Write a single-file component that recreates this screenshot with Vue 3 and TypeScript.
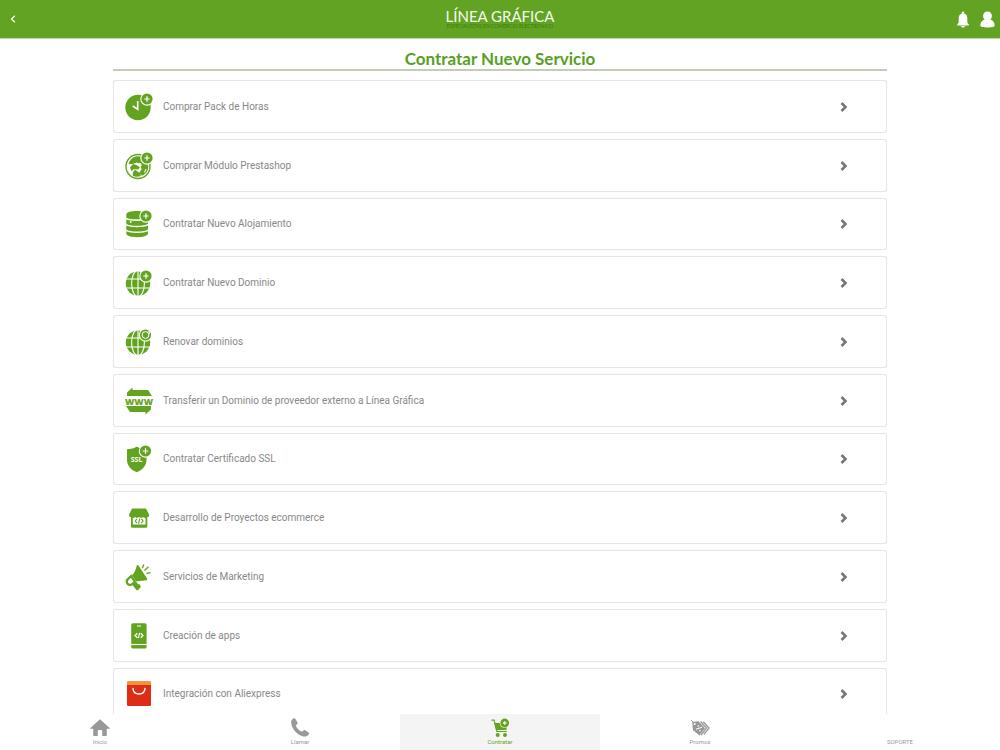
<script setup lang="ts">
type IconName = 'clock' | 'presta' | 'database' | 'globe' | 'renew' | 'transfer' | 'ssl' | 'store' | 'megaphone' | 'phone' | 'bag'

interface Badge { x: number; y: number; ring?: boolean }
interface Service { icon: IconName; label: string; badge?: Badge }
interface Tab { icon: 'home' | 'call' | 'cart' | 'tags' | null; label: string; active?: boolean }

const services: Service[] = [
  { icon: 'clock', label: 'Comprar Pack de Horas', badge: { x: 23, y: 7 } },
  { icon: 'presta', label: 'Comprar Módulo Prestashop', badge: { x: 23, y: 7 } },
  { icon: 'database', label: 'Contratar Nuevo Alojamiento', badge: { x: 22, y: 7 } },
  { icon: 'globe', label: 'Contratar Nuevo Dominio', badge: { x: 22, y: 8 } },
  { icon: 'renew', label: 'Renovar dominios', badge: { x: 21.5, y: 8, ring: true } },
  { icon: 'transfer', label: 'Transferir un Dominio de proveedor externo a Línea Gráfica' },
  { icon: 'ssl', label: 'Contratar Certificado SSL', badge: { x: 21.5, y: 7 } },
  { icon: 'store', label: 'Desarrollo de Proyectos ecommerce' },
  { icon: 'megaphone', label: 'Servicios de Marketing' },
  { icon: 'phone', label: 'Creación de apps' },
  { icon: 'bag', label: 'Integración con Aliexpress' },
]

const tabs: Tab[] = [
  { icon: 'home', label: 'Inicio' },
  { icon: 'call', label: 'Llamar' },
  { icon: 'cart', label: 'Contratar', active: true },
  { icon: 'tags', label: 'Promos' },
  { icon: null, label: 'SOPORTE' },
]
</script>

<template>
  <div class="app">
    <header class="topbar">
      <button class="icon-btn back" type="button" aria-label="Volver">
        <svg width="6" height="8" viewBox="0 0 6 8"><path d="M4.8.8 1.5 4l3.300 3.200" fill="none" stroke="#fff" stroke-width="1.200" /></svg>
      </button>
      <div class="brand">
        <span class="brand-name">LÍNEA GRÁFICA</span>
        <span class="brand-tag">ESPECIALISTAS EN COMERCIO ELECTRÓNICO</span>
      </div>
      <div class="actions">
        <button class="icon-btn" type="button" aria-label="Notificaciones">
          <svg width="12" height="17" viewBox="0 0 12 17" fill="#fff">
            <circle cx="6" cy="1.700" r="1.200" />
            <path d="M6 2.400c-2.900 0-4.300 1.900-4.300 4.700v4.500L.2 13.600v1h11.600v-1l-1.500-2V7.100c0-2.800-1.400-4.700-4.300-4.700zM4 15.100h4c-.2 1-.9 1.500-2 1.500s-1.800-.5-2-1.500z" />
          </svg>
        </button>
        <button class="icon-btn" type="button" aria-label="Mi cuenta">
          <svg width="15" height="17" viewBox="0 0 15 17" fill="#fff">
            <path d="M7.500.4c2.700 0 4.400 1.900 4.400 4.400 0 1.700-.7 2.900-1.600 3.800 2.700.8 4.400 3.100 4.400 5.900 0 1.300-3 2-7.200 2s-7.200-.7-7.200-2c0-2.800 1.700-5.100 4.400-5.900-.9-.9-1.600-2.100-1.600-3.800C3.100 2.300 4.800.4 7.500.4z" />
          </svg>
        </button>
      </div>
    </header>

    <main class="content">
      <h1 class="title">Contratar Nuevo Servicio</h1>
      <ul class="list">
        <li v-for="s in services" :key="s.label">
          <button class="card" type="button">
            <svg class="service-icon" viewBox="0 0 30 30" width="30" height="30" fill="#62a420" aria-hidden="true">
              <template v-if="s.icon === 'clock'">
                <circle cx="14" cy="15.500" r="12.700" />
                <path d="M8.700 14 13.700 17.200V9" fill="none" stroke="#fff" stroke-width="1.600" />
              </template>
              <template v-else-if="s.icon === 'presta'">
                <circle cx="14" cy="15.500" r="12" fill="#fff" stroke="#62a420" stroke-width="1.400" />
                <path d="M4.500 13C6 7.800 9.700 5.200 14 5.200c6 0 10.300 4.600 10.300 10.300 0 4.500-2.500 7.700-6.300 9.300l-3.200-2.600 2.700-3.700-1-4.500-3.500-2.500L8.500 13z" />
                <path d="M6 16.500 9 13l3.500 1 3.500 2.500-2 2-4.500-.3-2 2zM9 25c-.8-3 .2-5.300 2.500-6l3.500 2.500L17 25c-2.500 1-5.500 1.100-8 0z" />
                <path d="M13.500 12.500 16.500 12l1.500 2.500-2 1z" fill="#fff" />
                <path d="M20.500 21.500 22 18" stroke="#fff" stroke-width="1" />
              </template>
              <template v-else-if="s.icon === 'database'">
                <path d="M2.300 5.500C2.300 3 7 2 13 2s11 1 11 3.500v2.700c0 1.300-5 2.100-11 2.100S2.300 9.500 2.300 8.200z" />
                <path d="M2.300 10.600c2.500 1.100 6 1.400 10.700 1.400s8.500-.3 11-1.400v4.200c-2 1.500-6 2-11 2s-9-.5-10.700-2z" />
                <path d="M2.300 16.600c2.500 1.300 6 1.700 10.700 1.700s8.500-.4 11-1.700v3.900c-2 1.400-6 2-11 2s-9-.6-10.700-2z" />
                <path d="M2.300 22.300c2.500 1.300 6 1.700 10.700 1.700s8.500-.4 11-1.700v2.500c-.6 2.300-5 3.400-11 3.400S2.900 27.100 2.300 24.800z" />
                <circle cx="6.700" cy="13" r=".9" fill="#fff" />
              </template>
              <template v-else-if="s.icon === 'globe' || s.icon === 'renew'">
                <circle cx="14" cy="15.500" r="12.200" />
                <g fill="none" stroke="#fff" stroke-width="1.100">
                  <ellipse cx="14" cy="15.500" rx="6.400" ry="13" />
                  <path d="M14 2v27M1 11h26M1 20h26" />
                </g>
              </template>
              <template v-else-if="s.icon === 'transfer'">
                <path d="M3 6.500 8.500 1.500V4H24l4 6H3zM27 23.500l-5.500 5V26H6l-4-6h25z" />
                <text x="15" y="18.700" text-anchor="middle" class="www">WWW</text>
              </template>
              <template v-else-if="s.icon === 'ssl'">
                <path d="M12.800 2.500c2.500 1.800 6 2.700 9.700 2.800V16c0 6-4.300 9.800-9.700 12.300C7.400 25.800 3 22 3 16V5.300c3.700-.1 7.300-1 9.800-2.800z" />
                <text x="12.500" y="17.500" text-anchor="middle" class="ssl">SSL</text>
              </template>
              <template v-else-if="s.icon === 'store'">
                <path d="M8 5.500h14l3.200 6.200c0 1.500-.8 2.300-1.600 2.300H6.700c-1 0-1.700-.8-1.700-2.300z" />
                <path d="M7 13h16.300v10.500c0 .8-.5 1.200-1.200 1.200H8.200c-.7 0-1.200-.4-1.200-1.200z" />
                <path d="M8.800 14.300h12.700v7.200H8.800z" fill="#fff" />
                <path d="M13 15.800 11.200 18l1.800 2.200M17.300 15.800l1.800 2.200-1.800 2.200M15.800 15.300l-1.300 5.400" fill="none" stroke="#62a420" stroke-width="1.100" />
                <path d="M9 13v2M13 13v1.700M17.300 13v1.700M21.300 13v2" stroke="#62a420" stroke-width="1.800" />
              </template>
              <template v-else-if="s.icon === 'megaphone'">
                <path d="M12.800 3.300c.8-.6 1.500-.2 2 .7l8.300 12.500c.5.9.1 1.700-.8 1.700L12 19.500l-4-6.200c2.800-2.400 4-6 4.800-10z" />
                <path d="M7.200 14 11 20.200l-3.500 2.200c-1.600.8-3.300.4-4.200-1-1-1.700-.6-3.400.8-4.600z" fill="#fff" stroke="#62a420" stroke-width="2.200" />
                <path d="M8 22.500 12.500 20l1.500 2.200h1.700l1.200 2.500-2.700 3.200c-.6.700-1.500.5-2-.2z" />
                <path d="M18.300 6.300 19.800 2.500M20.500 8.500l4-3.700M22.500 11.500l4-.9" stroke="#62a420" stroke-width="1.400" />
              </template>
              <template v-else-if="s.icon === 'phone'">
                <rect x="7.200" y="2.300" width="15.400" height="25.200" rx="1.600" />
                <path d="M7 23.500h16" stroke="#fff" stroke-width="1.100" />
                <path d="M13 5h4M13.300 12.300 11 14.500l2.300 2.200M16.700 12.300l2.300 2.200-2.300 2.200M15.700 11.800l-1.400 5.400" fill="none" stroke="#fff" stroke-width="1.200" />
              </template>
              <template v-else>
                <rect x="3" y="2.500" width="24" height="24.500" rx="1.200" fill="#dd2c17" />
                <path d="M4.200 2.500h21.600c.7 0 1.200.5 1.200 1.200V6H3V3.700c0-.7.500-1.200 1.200-1.200z" fill="#f59330" />
                <path d="M9 9.500c.3 3.500 2.700 5.500 6 5.500s5.700-2 6-5.500" fill="none" stroke="#fff" stroke-width="1.500" stroke-linecap="round" />
              </template>

              <g v-if="s.badge" :transform="`translate(${s.badge.x} ${s.badge.y})`">
                <circle r="6.700" fill="#fff" />
                <circle r="5.600" />
                <g v-if="s.badge.ring" fill="none" stroke="#fff">
                  <circle r="3.400" stroke-width="1" />
                  <path d="M2-2.800 4-4v3" stroke-width=".8" />
                </g>
                <path v-else d="M-2.700 0h5.400M0-2.700v5.400" stroke="#fff" stroke-width="1.200" />
              </g>
            </svg>
            <span class="card-label">{{ s.label }}</span>
            <svg class="chevron" width="8" height="10" viewBox="0 0 8 10" aria-hidden="true">
              <path d="M1.500 1 5.500 5l-4 4" fill="none" stroke="#777" stroke-width="2.600" />
            </svg>
          </button>
        </li>
      </ul>
    </main>

    <nav class="tabs">
      <a v-for="t in tabs" :key="t.label" href="#" class="tab" :class="{ active: t.active }">
        <svg v-if="t.icon" width="20" height="20" viewBox="0 0 20 20" fill="currentColor" aria-hidden="true">
          <path v-if="t.icon === 'home'" d="M10 1.200.3 10c-.3.400-.1.700.4.700h2.500v6.400c0 .6.400 1 1 1h3.600v-5.400c0-.5.300-.8.800-.8h2.800c.5 0 .8.300.8.800v5.400h3.600c.6 0 1-.4 1-1v-6.400h2.500c.5 0 .7-.3.4-.7z" />
          <path v-else-if="t.icon === 'call'" d="M3 .8c.9-.7 1.700-.6 2.400.2l2 3.300c.4.700.3 1.400-.4 2L5.800 7.400c.9 2.800 3.300 5.200 6.300 6.300l1.200-1.200c.6-.6 1.300-.7 2-.3l3.300 2.200c.7.600.8 1.400.1 2.100-1.300 1.800-3 2.400-5.200 2C7.300 17.200 1.900 10.700 1.200 5.200 1 3.200 1.600 1.800 3 .8z" />
          <g v-else-if="t.icon === 'cart'">
            <path d="M1.500 2.200h2.600l2.700 11.300h10" fill="none" stroke="currentColor" stroke-width="1.200" />
            <path d="M4.300 5h13.500l-1.500 7H6.200z" />
            <circle cx="7.700" cy="17" r="2" /><circle cx="15" cy="17" r="2" />
            <circle cx="14.700" cy="5" r="5" fill="#f4f4f4" /><circle cx="14.700" cy="5" r="4.400" />
            <path d="M12.900 5h3.600M14.700 3.200v3.600" stroke="#f4f4f4" stroke-width="1.300" />
          </g>
          <g v-else>
            <path d="m1 2 2.200 2.200" fill="none" stroke="currentColor" stroke-width="1" />
            <path d="m2.200 4 6.300-.7 6.500 6.900-5.500 7.300-6.500-5.300z" />
            <path d="M10.500 3.500 16.500 10l-5.300 7M13.300 3.700 19 10l-5 6.300" fill="none" stroke="currentColor" stroke-width="1.300" />
            <circle cx="4.700" cy="6" r="1" fill="#fff" />
            <path d="m6 11.300 6-2" stroke="#fff" stroke-width="1.200" />
            <circle cx="8.300" cy="8" r=".8" fill="#fff" /><circle cx="10" cy="12.800" r=".8" fill="#fff" />
          </g>
        </svg>
        <span>{{ t.label }}</span>
      </a>
    </nav>
  </div>
</template>

<style>
body {
  margin: 0;
}
</style>

<style scoped>
.app {
  display: flex;
  flex-direction: column;
  height: 100vh;
  background: #fff;
  font-family: Roboto, "Liberation Sans", sans-serif;
  color: #888;
}

.topbar {
  display: grid;
  grid-template-columns: 1fr auto 1fr;
  align-items: center;
  flex: none;
  height: 38px;
  background: #62a323;
  border-bottom: 1px solid #c2d7ad;
}

.icon-btn {
  display: flex;
  padding: 0;
  border: 0;
  background: none;
  cursor: pointer;
}

.back {
  justify-self: start;
  padding: 6px 10px;
}

.brand {
  display: flex;
  flex-direction: column;
  align-items: center;
  font-family: Lato, sans-serif;
}

.brand-name {
  font-size: 15px;
  line-height: 15px;
  color: #f4faee;
}

.brand-tag {
  font-size: 5px;
  line-height: 5px;
  color: #3d7c12;
}

.actions {
  display: flex;
  align-items: center;
  justify-self: end;
  gap: 11px;
  padding-right: 5px;
}

.content {
  flex: 1;
  min-height: 0;
  overflow-y: auto;
  scrollbar-width: none;
}

.title {
  width: 77.4%;
  margin: 0 auto;
  padding-top: 10px;
  border-bottom: 2px solid #c3ccb6;
  font-family: Lato, sans-serif;
  font-size: 17px;
  font-weight: 700;
  line-height: 20px;
  text-align: center;
  color: #579f24;
}

.list {
  display: grid;
  gap: 6px;
  width: 77.4%;
  margin: 9px auto;
  padding: 0;
  list-style: none;
}

.card {
  display: flex;
  align-items: center;
  gap: 9px;
  box-sizing: border-box;
  width: 100%;
  height: calc(6.9vh + 1px);
  min-height: 44px;
  padding: 1px 38px 0 10px;
  border: 1px solid #e6e6e6;
  border-radius: 3px;
  background: #fff;
  box-shadow: 0 0 1px #e4e4e4;
  font: inherit;
  color: inherit;
  text-align: left;
  cursor: pointer;
}

.service-icon,
.chevron {
  flex: none;
}

.card-label {
  flex: 1;
  font-size: 10px;
  line-height: 14px;
}

.www {
  font: 800 9px "Open Sans", sans-serif;
  stroke: #fff;
  stroke-width: 2px;
  paint-order: stroke;
}

.ssl {
  font: 700 7px "Noto Sans", sans-serif;
  fill: #fff;
}

.tabs {
  display: grid;
  grid-template-columns: repeat(5, 1fr);
  flex: none;
  height: 36px;
}

.tab {
  display: flex;
  flex-direction: column;
  align-items: center;
  justify-content: flex-end;
  padding-bottom: 4px;
  font-size: 6px;
  line-height: 8px;
  color: #999;
  text-decoration: none;
}

.tab.active {
  background: #f4f4f4;
  color: #62a420;
}
</style>
